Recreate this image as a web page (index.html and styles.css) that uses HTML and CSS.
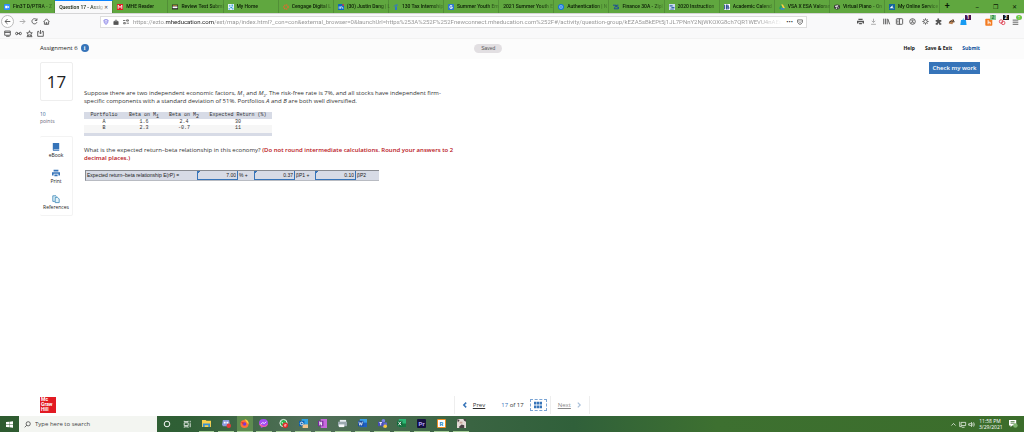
FILE: index.html
```html
<!DOCTYPE html>
<html lang="en">
<head>
<meta charset="utf-8">
<title>Question 17 - Assignment 6</title>
<link rel="stylesheet" href="styles.css">
</head>
<body>
<nav class="tabs" aria-label="Tabs">
  <button class="tab"><svg viewBox="0 0 10 10"><rect width="10" height="10" rx="2" fill="#2d8cff"/><path d="M2 3h4v4H2zM6.500 4.500l2-1.500v4l-2-1.500z" fill="#fff"/></svg><span>Fin3T D/PTRA - Z</span></button>
  <button class="tab active"><span>Question 17 - Assig</span><i>✕</i></button>
  <button class="tab"><svg viewBox="0 0 10 10"><rect width="10" height="10" fill="#e21a23"/><path d="M2 8V2l3 4 3-4v6" fill="none" stroke="#fff" stroke-width="1.500"/></svg><span>MHE Reader</span></button>
  <button class="tab"><svg viewBox="0 0 10 10"><rect y="1" width="10" height="8" fill="#222"/><path d="M1 4h8v3H1z" fill="#fff"/><path d="M1 2h8v1H1z" fill="#e9b53b"/></svg><span>Review Test Submi</span></button>
  <button class="tab"><svg viewBox="0 0 10 10"><rect width="10" height="10" fill="#dff1fa"/><path d="M2 2h2v2H2zM6 1h2v3H6zM4 5h3v2H4zM1 7h2v2H1zM7 7h2v2H7z" fill="#2a9ad4"/></svg><span>My Home</span></button>
  <button class="tab"><svg viewBox="0 0 10 10"><circle cx="5" cy="5" r="3.500" fill="none" stroke="#f0642c" stroke-width="2" stroke-dasharray="2 1"/></svg><span>Cengage Digital L</span></button>
  <button class="tab"><svg viewBox="0 0 10 10"><rect width="10" height="10" rx="1" fill="#0a66c2"/><path d="M2 4v4M4.500 8V4M4.500 6q2-3 3.500 0v2" fill="none" stroke="#fff" stroke-width="1.300"/><circle cx="8.500" cy="1.500" r="1.500" fill="#e33"/></svg><span>(30) Justin Dang | L</span></button>
  <button class="tab"><svg viewBox="0 0 10 10"><path d="M5 4v6" fill="none" stroke="#2164f3" stroke-width="2.500"/><path d="M2 4q2-4 6-2" fill="none" stroke="#2164f3" stroke-width="1.500"/></svg><span>130 Tax Internship</span></button>
  <button class="tab"><svg viewBox="0 0 10 10"><rect width="10" height="10" rx="1" fill="#2c76cf"/><path d="M7 3Q3 1 3 5t4 2V5H5" fill="none" stroke="#fff" stroke-width="1.500"/></svg><span>Summer Youth Em</span></button>
  <button class="tab"><span>2021 Summer Youth E</span></button>
  <button class="tab"><svg viewBox="0 0 10 10"><circle cx="5" cy="5" r="5" fill="#1273de"/><path d="M3 3h4v4H3z" fill="none" stroke="#d5e9ff"/></svg><span>Authentication | N</span></button>
  <button class="tab"><svg viewBox="0 0 10 10"><path d="M0 2h5L2 8h3M9 2H6v3h3v3H5" fill="none" stroke="#16469d" stroke-width="1.500"/></svg><span>Finance 30A - Zipl</span></button>
  <button class="tab"><svg viewBox="0 0 10 10"><rect width="10" height="10" fill="#c9d9ef"/><path d="M1 2h5v2H1zM4 5h5v2H4zM2 8h6v1H2z" fill="#3566a8"/></svg><span>2020 Instruction</span></button>
  <button class="tab"><svg viewBox="0 0 10 10"><rect width="10" height="10" fill="#fff"/><path d="M1 1v8M4 1v8M4 2h3v3H4h4v3H4" fill="none" stroke="#1c3f86" stroke-width="1.500"/></svg><span>Academic Calend</span></button>
  <button class="tab"><svg viewBox="0 0 10 10"><path d="M3.500 1L0 7l2 2 3-5z" fill="#1fa463"/><path d="M3.500 1h3L10 7H7z" fill="#ffcf48"/><path d="M2 9h6l2-2H3z" fill="#2c7cf0"/></svg><span>VSA X ESA Valoran</span></button>
  <button class="tab"><svg viewBox="0 0 10 10"><ellipse cx="5" cy="5" rx="5" ry="4" fill="#333"/><path d="M2 3l5-1v2L2 5zM3 6h2v2H3zM6 6h2v1H6z" fill="#fff"/></svg><span>Virtual Piano - On</span></button>
  <button class="tab"><svg viewBox="0 0 10 10"><rect width="10" height="10" fill="#13659c"/><path d="M1 7l5-5v4l3 1z" fill="#fff"/></svg><span>My Online Service</span></button>
  <button class="newtab" aria-label="New tab">+</button>
  <span class="window"><button aria-label="Minimize">–</button><button aria-label="Restore">❐</button><button aria-label="Close">✕</button></span>
</nav>

<div class="toolbar">
  <div class="navbtns">
    <button class="back" aria-label="Back"><svg viewBox="0 0 10 10"><path d="M9 5H1.500M5 1.500L1.500 5 5 8.500"/></svg></button>
    <button class="dim" aria-label="Forward"><svg viewBox="0 0 10 10"><path d="M1 5h7.500M5 1.500L8.500 5 5 8.500"/></svg></button>
    <button aria-label="Reload"><svg viewBox="0 0 10 10"><path d="M8.500 6A3.700 3.700 0 1 1 8 2.500M8.500.5v3h-3"/></svg></button>
    <button aria-label="Home"><svg viewBox="0 0 10 10"><path d="M.8 5.500L5 1.200l4.200 4.300M2 5v4h6V5M4.500 9V6.500h1V9"/></svg></button>
  </div>
  <div class="urlbar">
    <svg class="shield" viewBox="0 0 10 10"><path d="M5 1l3.500 1q0 5-3.500 7.200Q1.500 7 1.500 2zM5 3v4"/></svg>
    <svg viewBox="0 0 10 10"><rect x="1.500" y="4.500" width="7" height="4.500" fill="#555"/><path d="M3 4.500V3q2-3 4 0v1.500"/></svg>
    <svg viewBox="0 0 10 10"><path d="M0 2.500h4M6 1.500h3v2H6zM6 7h4M1 6h3v2H1z"/></svg>
    <p class="url">https://ezto.<b>mheducation.com</b>/ext/map/index.html?_con=con&amp;external_browser=0&amp;launchUrl=https%253A%252F%252Fnewconnect.mheducation.com%252F#/activity/question-group/kEZA5sBkEPt5j1JL7PNnY2NjWKOXG8ch7QR1WEVU4nAEspHkF17KQy5yzKOY</p>
    <span>•••</span>
    <svg viewBox="0 0 10 10"><path d="M1 1.500h8v4Q7 9 5 9T1 5.500zM3 4l2 2 2-2"/></svg>
  </div>
  <div class="extensions">
    <button aria-label="Print"><svg viewBox="0 0 10 10"><path d="M2 1h6v2H2zM0 4h10v4H8V6H2v2H0zM3 7h4v2H3z" fill="#555" stroke="none"/></svg></button>
    <button class="dim" aria-label="Downloads"><svg viewBox="0 0 10 10"><path d="M5 1v5M2.500 4L5 6.500 7.500 4M1.500 9h7"/></svg></button>
    <button aria-label="Library"><svg viewBox="0 0 10 10"><path d="M1 1v8M3.500 1v8M6 1v8M7 1.500L9.500 9"/></svg></button>
    <button aria-label="Sidebar"><svg viewBox="0 0 10 10"><rect x=".5" y="1" width="9" height="8" rx="1"/><path d="M5 1v8M2 3h1.500M2 5h1.500M2 7h1.500"/></svg></button>
    <button aria-label="Account"><svg viewBox="0 0 10 10"><circle cx="5" cy="5" r="4"/><circle cx="5" cy="4" r="1"/><path d="M3 7q2-2 4 0"/></svg></button>
    <button aria-label="Settings"><svg viewBox="0 0 10 10"><circle cx="5" cy="5" r="2.500"/><path d="M5 .5v2M5 7.500v2M.5 5h2M7.500 5h2M2 2l1 1M7 7l1 1M2 8l1-1M7 3l1-1"/></svg></button>
    <button aria-label="Add-ons"><svg viewBox="0 0 10 10"><path d="M1 3h2.500q-1-2.500 1-2.500T6 3h3v2.500H7.500v2H9V9.500H6q0-2-1-2t-1 2H1V7q2 0 2-1T1 5z" fill="#555" stroke="none"/></svg></button>
    <button aria-label="Reader"><svg viewBox="0 0 10 10"><path d="M1 8Q1 3 8 2l1 3-3 4z" fill="#b98254" stroke="none"/><path d="M2 6l3-2 2 2M7 2l2 4" stroke="#333"/></svg></button>
    <button class="badged" aria-label="Bag"><svg viewBox="0 0 10 10"><path d="M0 3h7l1 7H-1z" fill="#189bf2" stroke="none"/><path d="M2 4q1.500-5 3 0" stroke="#189bf2"/></svg><em class="plum">1</em></button>
    <button class="badged far" aria-label="Honey"><svg viewBox="0 0 10 10"><rect x="-1" width="10" height="10" y="1" rx="1" fill="#f37b20" stroke="none"/><path d="M3 3v6M3 6h3v3" stroke="#fff"/></svg><em class="mint">2</em></button>
    <button class="badged" aria-label="Blocker"><svg viewBox="0 0 10 10"><circle cx="3" cy="5" r="2.500" stroke="#df4557"/><circle cx="6" cy="7" r="2.500" stroke="#df4557"/></svg><em class="black">2</em></button>
    <button class="badged" aria-label="Menu"><svg viewBox="0 0 10 10"><path d="M1 3h8M1 6h8M1 9h8"/></svg><em class="lime">↑</em></button>
  </div>
</div>
<div class="bookmarks">
  <svg viewBox="0 0 10 10"><path d="M1 1.500h8v6H1zM1 3.500h8M3 9h5"/></svg>
  <svg viewBox="0 0 10 10"><circle cx="2.500" cy="5" r="1.700"/><circle cx="7.500" cy="5" r="1.700"/><path d="M3 5h4"/></svg>
  <svg viewBox="0 0 10 10"><path d="M5 1l1 3h3L7 6l1 2.500L5 7 2 8.500 3 6 1 4h3zM1 9.500h8"/></svg>
  <svg viewBox="0 0 10 10"><path d="M3 2H1v7h8V2H7M5 0v5M3 3.500L5 5.500l2-2"/></svg>
</div>

<header class="header">
  <h1>Assignment 6 <button class="info" aria-label="Information">i</button></h1>
  <span class="saved">Saved</span>
  <div class="actions"><a href="#">Help</a><a href="#">Save &amp; Exit</a><a href="#" class="submit">Submit</a></div>
</header>

<main class="main">
  <aside class="side">
    <div class="number">17</div>
    <p class="points"><span>10</span><br>points</p>
    <div class="tools">
      <a href="#"><svg viewBox="0 0 10 10"><path d="M1 0h8v8H2v1h7v1H2L1 9z" fill="#3674b9"/></svg>eBook</a>
      <a href="#"><svg viewBox="0 0 10 10"><path d="M2 1h6v2H2zM0 4h10v4H8V6H2v2H0zM3 7h4v2H3z" fill="#3674b9"/></svg>Print</a>
      <a href="#"><svg viewBox="0 0 10 10"><path d="M3.500 8H1V1h4l1 1M4 3h3l2 2v4.500H4z" fill="#e3f4fa" stroke="#3985b6"/></svg>References</a>
    </div>
  </aside>
  <section class="question">
    <p>Suppose there are two independent economic factors, <i>M</i><sub>1</sub> and <i>M</i><sub>2</sub>. The risk-free rate is 7%, and all stocks have independent firm-specific components with a standard deviation of 51%. Portfolios <i>A</i> and <i>B</i> are both well diversified.</p>
    <table class="data">
      <thead><tr><th>Portfolio</th><th>Beta on M<sub>1</sub></th><th>Beta on M<sub>2</sub></th><th class="wide">Expected Return (%)</th></tr></thead>
      <tbody><tr><td>A</td><td>1.6</td><td>2.4</td><td>30</td></tr><tr><td>B</td><td>2.3</td><td>-0.7</td><td>11</td></tr></tbody>
    </table>
    <p>What is the expected return–beta relationship in this economy? <strong>(Do not round intermediate calculations. Round your answers to 2 decimal places.)</strong></p>
    <div class="answer">
      <label for="rf">Expected return–beta relationship E(rP) =</label>
      <input id="rf" value="7.00"><span class="unit">% +</span>
      <input aria-label="Beta P1 coefficient" value="0.37"><span class="unit mid">βP1 +</span>
      <input aria-label="Beta P2 coefficient" value="0.10"><span class="unit end">βP2</span>
    </div>
  </section>
  <button class="check">Check my work</button>
</main>

<footer class="footer">
  <div class="logo">Mc<br>Graw<br>Hill</div>
  <nav class="pager">
    <a class="prev" href="#"><svg viewBox="0 0 10 10"><path d="M7 1L3 5l4 4" stroke-width="2.500"/></svg><u>Prev</u></a>
    <span class="count"><b>17</b> of 17</span>
    <button class="gridbtn" aria-label="All questions"><svg viewBox="0 0 10 10"><path d="M0 1h3v3.500H0zM3.600 1h3v3.500h-3zM7.200 1H10v3.500H7.200zM0 5.500h3V9H0zM3.600 5.500h3V9h-3zM7.200 5.500H10V9H7.200z" fill="#3674b9" stroke="none"/></svg></button>
    <a class="next" href="#"><u>Next</u><svg viewBox="0 0 10 10"><path d="M3 1l4 4-4 4" stroke-width="2"/></svg></a>
  </nav>
</footer>

<div class="taskbar">
  <button class="start" aria-label="Start"><svg viewBox="0 0 10 10"><path d="M0 1.500L4.700 1v3.700H0zM5.200 1L10 .5v4.200H5.200zM0 5.200h4.700V9L0 8.500zM5.200 5.200H10v4.300L5.200 9z" fill="#fff"/></svg></button>
  <label class="search"><svg viewBox="0 0 10 10"><circle cx="6" cy="4" r="3"/><path d="M4 6L1 9"/></svg><input placeholder="Type here to search"></label>
  <div class="apps">
    <button class="idle" aria-label="Cortana"><svg viewBox="0 0 10 10"><circle cx="5" cy="5" r="3.500" fill="none" stroke="#fff" stroke-width="1.200"/></svg></button>
    <button class="idle" aria-label="Task view"><svg viewBox="0 0 10 10"><path d="M1.500 3.500h5v3.500h-5zM1.500 1v1h5V1M1.500 9.500v-1h5v1M9 1v2M9 4v5" fill="none" stroke="#fff"/></svg></button>
    <button aria-label="Files"><svg viewBox="0 0 10 10"><path d="M0 1h4l1 1h5v7H0z" fill="#f8d04d"/><path d="M1 5h8v4H7V7H3v2H1z" fill="#3593d5"/></svg></button>
    <button aria-label="Discord"><svg viewBox="0 0 10 10"><path d="M1 1h7l1 7H1L0 6z" fill="#8b9ce0"/><path d="M2 3h2v2H2zM5 3h2v2H5z" fill="#fff"/><circle cx="7.500" cy="7.500" r="2.500" fill="#e33b3b"/></svg></button>
    <button class="current" aria-label="Firefox"><svg viewBox="0 0 10 10"><circle cx="5" cy="5.500" r="4.500" fill="#ff7139"/><path d="M5 0q5 1 4.500 6L7 3z" fill="#ffd13b"/><circle cx="5" cy="5.500" r="2" fill="#7a3ad3"/><path d="M1 3l4 1-2 2z" fill="#e93333"/></svg></button>
    <button aria-label="Messenger"><svg viewBox="0 0 10 10"><path d="M5 0q5 0 5 4.500T5 9L2 10V8Q0 7 0 4.500 0 0 5 0z" fill="#a34bf4"/><path d="M0 5q1 4 5 4t5-4L6 8z" fill="#f3609b"/><path d="M2 6l2-2 2 1 2-2" fill="none" stroke="#fff"/></svg></button>
    <button aria-label="WhatsApp"><svg viewBox="0 0 10 10"><circle cx="5" cy="4.500" r="4" fill="#29b34a" stroke="#fff"/><path d="M3 3q1 3 4 3" fill="none" stroke="#fff"/><circle cx="7" cy="7" r="3" fill="#e42424"/><path d="M6 6h2v1H6v1h2" fill="none" stroke="#fff" stroke-width=".6"/></svg></button>
    <button aria-label="Outlook"><svg viewBox="0 0 10 10"><path d="M3 0h7v8H3z" fill="#31a3e4"/><path d="M0 2h6v6H0z" fill="#0d62b3"/><circle cx="3" cy="5" r="1.500" fill="none" stroke="#fff"/><path d="M4 6h6v4H4z" fill="#f1c48c"/></svg></button>
    <button aria-label="OneNote"><svg viewBox="0 0 10 10"><path d="M3 0h7v10H3z" fill="#c769dc"/><path d="M0 2h6v6H0z" fill="#7b28a0"/><path d="M2 7V3l2 4V3" fill="none" stroke="#fff"/></svg></button>
    <button aria-label="Printer"><svg viewBox="0 0 10 10"><path d="M2 1h7v3H2z" fill="#e7edf1"/><path d="M0 3h10v5H0z" fill="#9aa9af"/><path d="M1 6h6v3H1z" fill="#f6f8f9"/></svg></button>
    <button aria-label="Word"><svg viewBox="0 0 10 10"><path d="M2 0h8v9H2z" fill="#3aa0eb"/><path d="M2 4h8v5H2z" fill="#1f5fc0"/><path d="M0 2h6v6H0z" fill="#174a9c"/><path d="M1 3l1 4 1-3 1 3 1-4" fill="none" stroke="#fff" stroke-width=".8"/></svg></button>
    <button aria-label="Teams"><svg viewBox="0 0 10 10"><circle cx="6" cy="2" r="2" fill="#7b83eb"/><path d="M3 4h7v4L6 10z" fill="#6068cc"/><path d="M0 3h6v5H0z" fill="#464eb8"/><path d="M1.500 4h3M3 4v3" stroke="#fff"/><circle cx="8" cy="8" r="2" fill="#f6ca3a"/></svg></button>
    <button aria-label="Excel"><svg viewBox="0 0 10 10"><path d="M2 0h8v9H2z" fill="#2cb875"/><path d="M2 5h8v4H2z" fill="#187841"/><path d="M0 2h6v6H0z" fill="#0f6938"/><path d="M1.500 3l3 4M4.500 3l-3 4" stroke="#fff"/></svg></button>
    <button aria-label="Premiere"><span class="tile pr">Pr</span></button>
    <button aria-label="Reader"><span class="tile ring">R</span></button>
    <button aria-label="Game"><svg viewBox="0 0 10 10"><path d="M0 0h10v10H0z" fill="#e4dad6"/><path d="M0 0l3 1-2 3zM7 0h3v3L8 2zM2 9l3-3 3 1v3H3z" fill="#4a4143"/><path d="M3 3h3v2H3z" fill="#c9a597"/></svg></button>
  </div>
  <div class="tray">
    <svg viewBox="0 0 10 10"><path d="M2 6.500l3-3 3 3"/></svg>
    <svg viewBox="0 0 10 10"><path d="M1 1v7h3M3 2h6.500v4.500H3zM4 9h4"/></svg>
    <svg viewBox="0 0 10 10"><path d="M1 4h2l2-2v6L3 6H1zM6.500 3.500q1 1.500 0 3M8 2q2 3 0 6"/></svg>
    <p class="clock">11:58 PM<br>3/29/2021</p>
    <button class="notes" aria-label="Notifications"><svg viewBox="0 0 10 10"><path d="M0 0h9v7H4L2 9V7H0z" fill="#fff"/><path d="M2 2h5M2 4h5" stroke="#3d6f2f"/><circle cx="8" cy="7" r="2.800" fill="#7fb56f"/></svg></button>
  </div>
</div>
</body>
</html>
```

FILE: styles.css
```css
* { box-sizing: border-box; }
body { margin: 0; min-height: 100vh; display: flex; flex-direction: column; background: #fff; color: #333; font: 6px/8px "Open Sans", sans-serif; }
button { padding: 0; border: 0; background: none; color: inherit; font: inherit; }
a { color: inherit; text-decoration: none; }
p, h1 { margin: 0; }
svg { width: 8px; height: 8px; flex: none; display: block; overflow: visible; }

.tabs { display: flex; height: 13px; background: #60a73f; font: 500 5px/13px Roboto, sans-serif; color: #0a1a05; }
.tab { flex: 1; min-width: 0; display: flex; align-items: center; gap: 3px; padding: 0 1px 0 4px; border-right: 1px solid #528f37; text-align: left; }
.tab svg { width: 6px; height: 6px; }
.tab span { flex: 1; white-space: nowrap; mask-image: linear-gradient(90deg, #000 70%, rgba(0, 0, 0, .2)); }
.tab i { font-style: normal; color: #444; }
.tab.active { gap: 1px; padding-right: 4px; background: #f9f9fa; border-top: 1px solid #0a84ff; }
.newtab { width: 14px; font-size: 9px; }
.window { display: flex; justify-content: space-between; width: 70px; padding: 0 7px 0 21px; font-size: 6px; }

.toolbar { display: flex; align-items: center; height: 16px; background: #f9f9fa; border-top: 1px solid #d5d5d6; }
.toolbar svg, .bookmarks svg { fill: none; stroke: #555; stroke-width: 1.3; }
.navbtns { display: flex; align-items: center; gap: 5px; width: 100px; padding-left: 1px; }
.navbtns .back { display: grid; place-items: center; width: 13px; height: 13px; border: 1px solid #bbb; border-radius: 50%; background: #fff; }
.navbtns svg { width: 7px; height: 7px; }
.dim { opacity: .5; }
.urlbar { flex: 1; min-width: 0; height: 12px; display: flex; align-items: center; gap: 4px; padding: 0 3px 0 2px; border: 1px solid #ddd; background: #fff; }
.urlbar svg { width: 6px; height: 6px; }
.urlbar .shield { stroke: #6860e0; }
.url { flex: 1; overflow: hidden; white-space: nowrap; color: #999; font: 6px/10px Roboto, sans-serif; mask-image: linear-gradient(90deg, #000 96%, transparent); }
.url b { font-weight: 400; color: #222; }
.extensions { display: flex; align-items: center; gap: 6px; padding: 0 5px 0 50px; }
.extensions svg { width: 7px; height: 7px; }
.badged { position: relative; }
.badged.far { margin-left: 12px; }
.badged em { position: absolute; top: -3px; right: -3px; width: 6px; height: 5px; font: bold 5px/5px Roboto, sans-serif; color: #fff; }
.plum { background: #4a1450; }
.badged .mint { background: #8ac98f; color: #173; }
.black { background: #111; }
.lime { background: #6cc644; border-radius: 50%; }
.bookmarks { display: flex; align-items: center; gap: 4px; height: 10px; padding-left: 4px; background: #f9f9fa; border-bottom: 1px solid #f2f2f2; }
.bookmarks svg { width: 7px; height: 7px; }

.header { display: grid; grid-template-columns: 10fr auto 11fr; align-items: center; height: 20px; padding: 0 44px 2px 40px; background: #fcfcfc; }
.header h1 { display: flex; align-items: center; gap: 3px; font: 6px/10px "Open Sans", sans-serif; color: #222; }
.info { width: 8px; height: 8px; border-radius: 50%; background: #3674b9; color: #fff; font: bold 6px/8px "Liberation Serif", serif; }
.saved { width: 28px; border-radius: 5px; background: #e2dfe2; text-align: center; font: 5px/9px "Liberation Sans", sans-serif; color: #555; }
.actions { display: flex; justify-content: flex-end; gap: 10px; font: 700 5px/8px "Open Sans", sans-serif; color: #111; }
.actions .submit { color: #0c4f9a; }

.main { flex: 1; display: flex; align-items: flex-start; padding: 3px 44px 0 40px; }
.side { width: 33px; text-align: center; }
.number { border: 1px solid #eee; border-radius: 2px; font: 17px/37px "Open Sans", sans-serif; color: #222; }
.points { margin-top: 10px; text-align: left; font: 5px/7px "Open Sans", sans-serif; color: #667; }
.points span { color: #345f94; }
.tools { display: flex; flex-direction: column; gap: 10px; margin-top: 11px; padding: 6px 0 4px; border: 1px solid #f3f3f3; border-left: 0; border-radius: 2px; }
.tools a { display: flex; flex-direction: column; align-items: center; gap: 1px; font: 5px/7px "Open Sans", sans-serif; color: #222; }
.question { width: 372px; margin: 27px 0 0 11px; }
.question sub { font-size: 4px; line-height: 1px; }
.question strong { font-weight: 600; color: #b81118; }
.data { width: 188px; margin: 7px 0 10px; table-layout: fixed; border-collapse: collapse; border-bottom: 3px solid #d7dbe6; font: 5px/6px "Liberation Mono", monospace; text-align: center; white-space: nowrap; }
.data th { padding: 0; background: #d7dbe6; font-weight: 400; line-height: 7px; }
.data .wide { width: 68px; }
.data sub { font-size: 5px; }
.data td { padding: 0; }
.data tr:nth-child(2) td { background: #f6f6f6; padding-bottom: 2px; }
.answer { display: flex; width: 294px; height: 11px; margin-top: 8px; margin-left: 1px; border-top: 1px solid #888b91; border-left: 1px solid #888b91; border-bottom: 1px solid #b8bbc2; background: #d7dbe6; font: 5px/9px "Liberation Sans", sans-serif; color: #222; }
.answer label { flex: 1; padding-left: 1px; }
.answer input { width: 41px; min-width: 0; padding: 0 1px; border: solid #3674b9; border-width: 0 1px 1px; border-radius: 0; background: linear-gradient(135deg, #3674b9 2px, #d7dbe6 2px); font: inherit; color: inherit; text-align: right; }
.unit { width: 16px; padding-left: 1px; }
.unit.mid { width: 20px; }
.unit.end { width: 23px; }
.check { width: 51px; margin-left: auto; background: #3674b9; color: #fff; font: 600 6px/12px "Open Sans", sans-serif; }

.footer { display: grid; grid-template-columns: 21fr auto 20fr; align-items: center; height: 22px; padding: 0 40px; }
.logo { width: 16px; height: 16px; padding: 0 1px; background: #e21a23; color: #fff; font: bold 5px/5px Roboto, sans-serif; }
.pager { display: flex; align-items: center; height: 18px; border: solid #eee; border-width: 0 1px; }
.pager svg { fill: none; stroke: #3674b9; }
.prev, .next { display: flex; align-items: center; gap: 5px; }
.prev { padding: 0 16px 0 7px; }
.prev svg, .next svg { width: 6px; height: 6px; }
.count b { font-weight: 400; color: #3674b9; }
.gridbtn { display: grid; place-items: center; width: 17px; height: 12px; margin: 0 3px 0 6px; border: 1px dashed #7aa4d4; }
.next { align-self: stretch; padding: 0 7px; border-left: 1px solid #eee; color: #888; }
.next svg { stroke: #a9c0da; }

.taskbar { display: flex; height: 16px; background: linear-gradient(90deg, #2e5b30 0, #2f5f35 18%, #52705a 30%, #3a6442 46%, #30603a 56%, #3d7030 70%, #3b6d2b); }
.start { display: grid; place-items: center; width: 19px; }
.start svg { width: 7px; height: 7px; }
.search { display: flex; align-items: center; gap: 4px; width: 138px; padding-left: 5px; background: #f3f5f1; }
.search svg { width: 7px; height: 7px; fill: none; stroke: #333; }
.search input { flex: 1; min-width: 0; padding: 0; border: 0; background: none; font: 6px/14px "Open Sans", sans-serif; }
.search input::placeholder { color: #444; }
.apps { display: flex; width: 314px; }
.apps button { flex: 1; display: grid; place-items: center; margin: 0 2px; border-bottom: 1px solid #a6cf99; }
.apps svg { width: 9px; height: 9px; }
.apps .idle { border-color: transparent; }
.apps .current { margin: 0 1px; background: #5e8b50; }
.apps .idle svg { width: 8px; height: 8px; }
.tile { width: 9px; border-radius: 1px; font: bold 6px/9px Roboto, sans-serif; text-align: center; }
.pr { background: #14103f; color: #b6a8ff; }
.ring { border: 1px solid #ef8c22; background: #fff; color: #1687c7; line-height: 7px; }
.tray { display: flex; align-items: center; gap: 2px; margin-left: auto; padding-right: 7px; }
.tray > svg { width: 7px; height: 7px; fill: none; stroke: #fff; }
.clock { width: 22px; margin-left: 2px; text-align: center; color: #fff; font: 5px/6px "Open Sans", sans-serif; }
.notes { margin-left: 6px; }
```
